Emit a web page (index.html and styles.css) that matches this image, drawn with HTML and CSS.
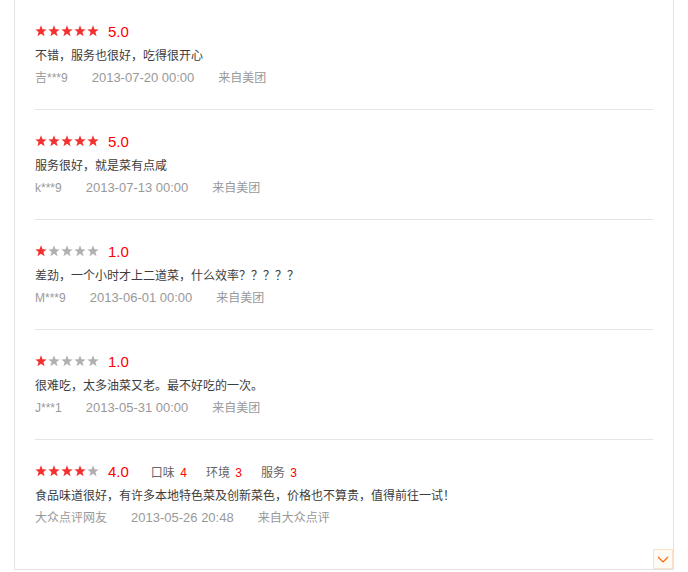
FILE: index.html
```html
<!DOCTYPE html>
<html lang="zh-CN">
<head>
  <meta charset="UTF-8">
  <title>评价</title>
  <link rel="stylesheet" href="styles.css">
</head>
<body>

  <svg width="0" height="0" class="defs">
    <defs>
      <polygon id="star" points="6,0.3 7.5,4.2 11.7,4.4 8.4,7 9.6,11.3 6,8.8 2.4,11.3 3.6,7 0.3,4.4 4.5,4.2"/>
    </defs>
  </svg>

  <div class="panel">
    <ul class="reviews">
      <li class="review">
        <div class="score-row">
          <span class="stars">
            <svg class="on" viewBox="0 0 12 12"><use href="#star"/></svg><svg class="on" viewBox="0 0 12 12"><use href="#star"/></svg><svg class="on" viewBox="0 0 12 12"><use href="#star"/></svg><svg class="on" viewBox="0 0 12 12"><use href="#star"/></svg><svg class="on" viewBox="0 0 12 12"><use href="#star"/></svg>
          </span>
          <span class="score">5.0</span>
        </div>
        <p class="content">不错，服务也很好，吃得很开心</p>
        <div class="meta"><span>吉***9</span><span class="date">2013-07-20 00:00</span><span>来自美团</span></div>
      </li>
      <li class="review">
        <div class="score-row">
          <span class="stars">
            <svg class="on" viewBox="0 0 12 12"><use href="#star"/></svg><svg class="on" viewBox="0 0 12 12"><use href="#star"/></svg><svg class="on" viewBox="0 0 12 12"><use href="#star"/></svg><svg class="on" viewBox="0 0 12 12"><use href="#star"/></svg><svg class="on" viewBox="0 0 12 12"><use href="#star"/></svg>
          </span>
          <span class="score">5.0</span>
        </div>
        <p class="content">服务很好，就是菜有点咸</p>
        <div class="meta"><span>k***9</span><span class="date">2013-07-13 00:00</span><span>来自美团</span></div>
      </li>
      <li class="review">
        <div class="score-row">
          <span class="stars">
            <svg class="on" viewBox="0 0 12 12"><use href="#star"/></svg><svg viewBox="0 0 12 12"><use href="#star"/></svg><svg viewBox="0 0 12 12"><use href="#star"/></svg><svg viewBox="0 0 12 12"><use href="#star"/></svg><svg viewBox="0 0 12 12"><use href="#star"/></svg>
          </span>
          <span class="score">1.0</span>
        </div>
        <p class="content">差劲，一个小时才上二道菜，什么效率？？？？？</p>
        <div class="meta"><span>M***9</span><span class="date">2013-06-01 00:00</span><span>来自美团</span></div>
      </li>
      <li class="review">
        <div class="score-row">
          <span class="stars">
            <svg class="on" viewBox="0 0 12 12"><use href="#star"/></svg><svg viewBox="0 0 12 12"><use href="#star"/></svg><svg viewBox="0 0 12 12"><use href="#star"/></svg><svg viewBox="0 0 12 12"><use href="#star"/></svg><svg viewBox="0 0 12 12"><use href="#star"/></svg>
          </span>
          <span class="score">1.0</span>
        </div>
        <p class="content">很难吃，太多油菜又老。最不好吃的一次。</p>
        <div class="meta"><span>J***1</span><span class="date">2013-05-31 00:00</span><span>来自美团</span></div>
      </li>
      <li class="review">
        <div class="score-row">
          <span class="stars">
            <svg class="on" viewBox="0 0 12 12"><use href="#star"/></svg><svg class="on" viewBox="0 0 12 12"><use href="#star"/></svg><svg class="on" viewBox="0 0 12 12"><use href="#star"/></svg><svg class="on" viewBox="0 0 12 12"><use href="#star"/></svg><svg viewBox="0 0 12 12"><use href="#star"/></svg>
          </span>
          <span class="score">4.0</span>
          <span class="sub">口味 <em>4</em></span>
          <span class="sub">环境 <em>3</em></span>
          <span class="sub">服务 <em>3</em></span>
        </div>
        <p class="content">食品味道很好，有许多本地特色菜及创新菜色，价格也不算贵，值得前往一试！</p>
        <div class="meta"><span>大众点评网友</span><span class="date">2013-05-26 20:48</span><span>来自大众点评</span></div>
      </li>
    </ul>

    <a class="more" href="#">
      <svg width="12" height="7" viewBox="0 0 12 7"><polyline points="1,1 6,6 11,1" fill="none" stroke="#ff6600" stroke-width="1.2"/></svg>
    </a>
  </div>

</body>
</html>
```

FILE: styles.css
```css
body {
  margin: 0;
  padding: 0 0 0 14px;
  font-family: "Liberation Sans", "Noto Sans CJK SC", sans-serif;
  font-size: 12px;
  background-color: #fff;
}
.defs {
  position: absolute;
}
.panel {
  position: relative;
  width: 658px;
  height: 569px;
  border: 1px solid #e3e3e3;
  border-top: none;
}
.reviews {
  list-style: none;
  margin: 0;
  padding: 0 20px;
}
.review {
  padding: 21px 0 21px;
  border-bottom: 1px solid #e5e5e5;
}
.review:last-child {
  border-bottom: none;
}
.score-row {
  display: flex;
  align-items: center;
  height: 20px;
}
.stars {
  display: flex;
  margin-right: 8px;
}
.stars svg {
  width: 12px;
  height: 12px;
  margin-right: 1px;
  fill: #b0b0b0;
}
.stars svg.on {
  fill: #f23030;
}
.score {
  font-size: 15px;
  color: #ff0000;
  margin-right: 22px;
}
.sub {
  color: #666;
  margin-right: 19px;
}
.sub em {
  font-style: normal;
  margin-left: 2px;
  color: #f00;
}
.content {
  margin: 5px 0 0;
  line-height: 20px;
  color: #3c3c3c;
}
.meta {
  display: flex;
  align-items: baseline;
  margin-top: 2px;
  line-height: 20px;
  color: #999;
}
.meta span {
  margin-right: 24px;
}
.meta .date {
  font-size: 13px;
}
.more {
  position: absolute;
  right: 0;
  bottom: 0;
  width: 18px;
  height: 18px;
  border: 1px solid #fbe1c9;
  background-color: #fffaf4;
  display: flex;
  align-items: center;
  justify-content: center;
}
```
